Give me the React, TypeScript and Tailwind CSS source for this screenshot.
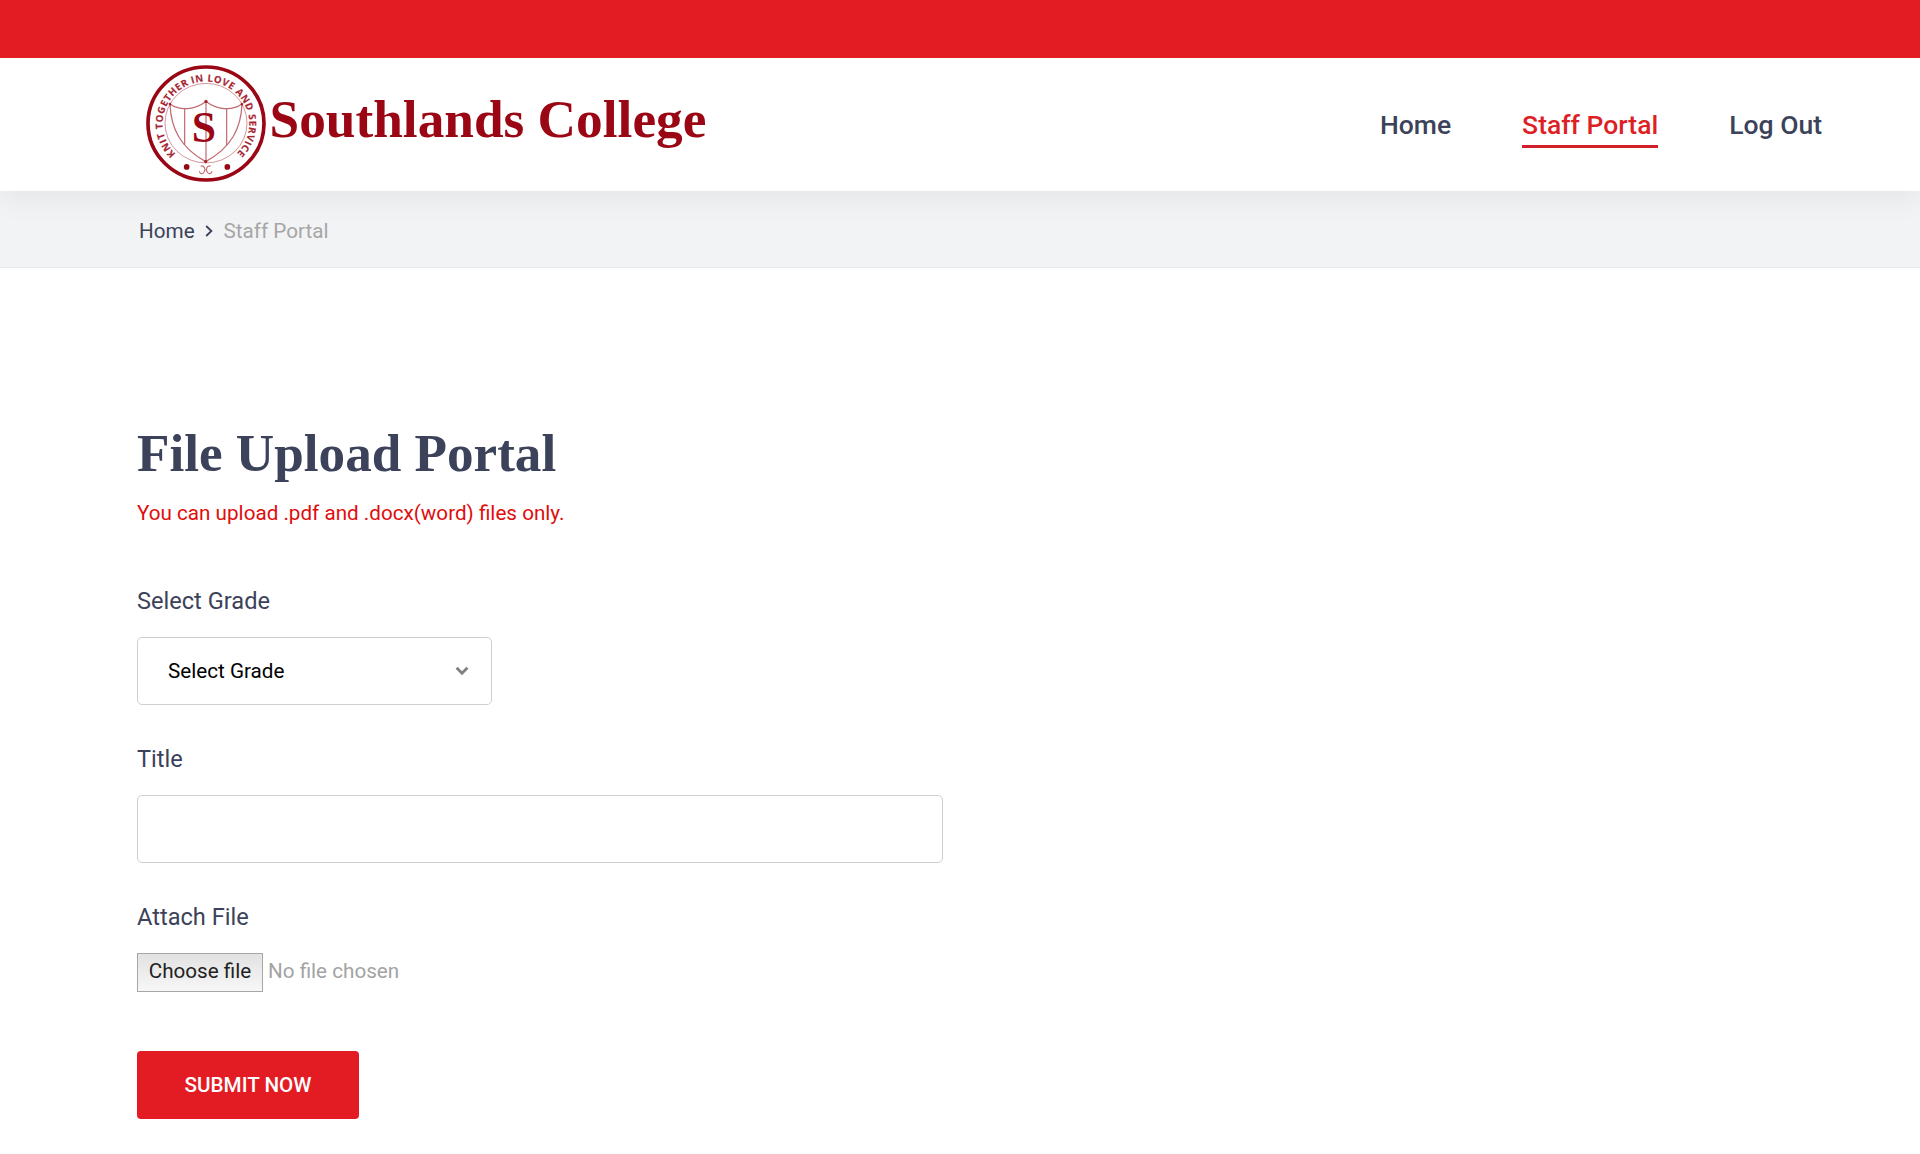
import type { ReactNode } from "react";

function Crest() {
  return (
    <svg
      className="h-[117px] w-[120px] shrink-0"
      viewBox="47 45 360 350"
      preserveAspectRatio="none"
      fill="none"
      stroke="#9a0614"
    >
      <defs>
        <path id="motto" d="M136.4 311 A130 126 0 1 1 315 313" />
      </defs>
      <ellipse cx="227" cy="220" rx="174" ry="169" strokeWidth="11" />
      <ellipse cx="227" cy="219" rx="123" ry="119" strokeWidth="2.5" opacity="0.5" />
      <text
        fill="#9a0614"
        stroke="#9a0614"
        strokeWidth="0.5"
        fontFamily="'Open Sans', sans-serif"
        fontWeight="700"
        fontSize="29"
        opacity="0.88"
      >
        <textPath href="#motto" textLength="602" lengthAdjust="spacing">
          KNIT TOGETHER IN LOVE AND SERVICE
        </textPath>
      </text>
      <g strokeWidth="3.6" opacity="0.6">
        <path d="M119 162 C150 184 195 178 227 154 C259 178 304 184 335 162" />
        <path d="M119 162 C122 235 150 292 226 334 C303 292 332 235 335 162" />
        <path d="M163 176 V284 M227 154 V334 M289 176 V284" />
      </g>
      <g fill="#9a0614" stroke="none">
        <circle cx="119" cy="162" r="4" opacity="0.8" />
        <circle cx="335" cy="162" r="4" opacity="0.8" />
        <circle cx="227" cy="154" r="5" opacity="0.8" />
        <circle cx="226" cy="334" r="5" opacity="0.8" />
        <circle cx="169" cy="350" r="8.5" />
        <circle cx="291" cy="350" r="8.5" />
        <text
          x="221"
          y="276"
          textAnchor="middle"
          fontFamily="'Liberation Serif', serif"
          fontWeight="700"
          fontSize="131"
        >
          S
        </text>
      </g>
      <path
        d="M211 347 C223 346 226 356 222 364 C218 373 208 371 207 363 M241 347 C229 346 226 356 230 364 C234 373 244 371 245 363"
        strokeWidth="3.4"
        opacity="0.6"
      />
    </svg>
  );
}

function Label({ children }: { children: ReactNode }) {
  return <label className="block text-[23.6px] leading-[30px]">{children}</label>;
}

export default function App() {
  return (
    <div className="min-h-[1154px] bg-white font-['Roboto',sans-serif] text-[#3b4259]">
      <div className="relative z-10 h-[58px] bg-[#e31b23]" />
      <header className="relative flex h-[133px] items-start bg-white pr-[98px] pl-[146px] shadow-[0_6px_30px_rgba(0,0,0,0.065)]">
        <div className="flex items-start pt-[7px]">
          <Crest />
          <span className="ml-[3.5px] pt-[25px] font-['Liberation_Serif',serif] text-[53.3px] leading-[60px] font-bold whitespace-nowrap text-[#9a0614]">
            Southlands College
          </span>
        </div>
        <nav className="ml-auto flex gap-[71px] pt-[50px] text-[26.5px] leading-[34px] font-medium whitespace-nowrap">
          <a>Home</a>
          <a className="border-b-3 border-[#d0202a] pb-[3px] text-[#dd1f26]">Staff Portal</a>
          <a>Log Out</a>
        </nav>
      </header>

      <div className="flex h-[77px] items-center border-b border-[#e8e9ea] bg-[#f2f3f5] pt-[3px] pl-[139px] text-[20.67px] leading-[30px]">
        <span>Home</span>
        <svg
          className="mt-px mr-[11px] ml-[10px] h-[12px] w-[8px]"
          viewBox="0 0 8 12"
          fill="none"
          stroke="#3b4259"
          strokeWidth="1.8"
        >
          <path d="M1.2 1 L6.4 6 L1.2 11" />
        </svg>
        <span className="text-[#a6a6a6]">Staff Portal</span>
      </div>

      <main className="pt-[155px] pl-[137px]">
        <h1 className="font-['Liberation_Serif',serif] text-[53.15px] leading-[60px] font-bold">
          File Upload Portal
        </h1>
        <p className="mt-[15px] text-[20.67px] leading-[30px] text-[#e00d0d]">
          You can upload .pdf and .docx(word) files only.
        </p>

        <form className="mt-[58px]">
          <Label>Select Grade</Label>
          <button
            type="button"
            className="mt-[21px] flex h-[68px] w-[355px] items-center justify-between rounded-[5px] border border-[#cfcfcf] pr-[22px] pl-[30px] text-[20.67px] text-black"
          >
            Select Grade
            <svg
              className="h-[10px] w-[14px]"
              viewBox="0 0 14 10"
              fill="none"
              stroke="#808080"
              strokeWidth="2.8"
            >
              <path d="M1.6 1.8 L7 7.2 L12.4 1.8" />
            </svg>
          </button>

          <div className="mt-[39px]">
            <Label>Title</Label>
          </div>
          <input
            type="text"
            className="mt-[21px] block h-[68px] w-[806px] rounded-[5px] border border-[#cfcfcf] px-[30px] text-[20.67px]"
          />

          <div className="mt-[39px]">
            <Label>Attach File</Label>
          </div>
          <div className="mt-[21px] flex items-center text-[20.67px]">
            <button
              type="button"
              className="h-[39px] w-[126px] border border-[#a6a6a6] bg-linear-to-b from-[#e2e2e2] to-[#f7f7f7] pb-[3px] whitespace-nowrap text-[#222222]"
            >
              Choose file
            </button>
            <span className="ml-[5px] pb-[3px] text-[#a3a3a3]">No file chosen</span>
          </div>

          <button
            type="button"
            className="mt-[59px] block h-[68px] w-[222px] rounded-[4px] bg-[#e31b23] text-[20.67px] font-medium text-white"
          >
            SUBMIT NOW
          </button>
        </form>
      </main>
    </div>
  );
}
